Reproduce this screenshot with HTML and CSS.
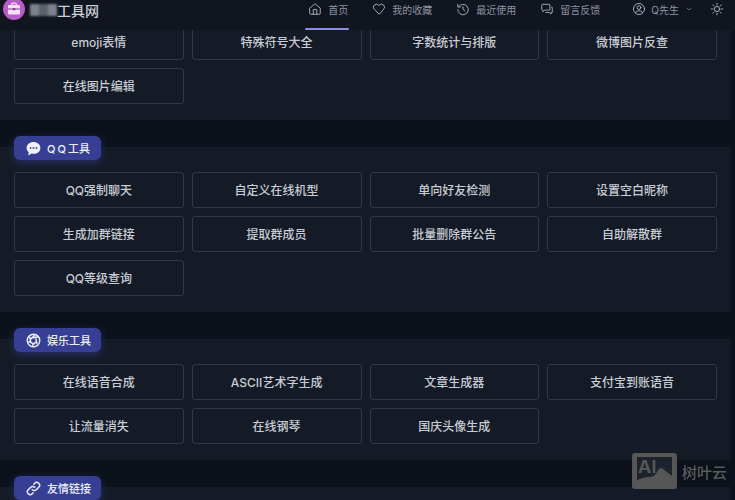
FILE: index.html
```html
<!DOCTYPE html>
<html lang="en">
<head>
    <meta charset="UTF-8">
    <meta name="viewport" content="width=device-width, initial-scale=1.0">
    <title>工具网</title>
    <link rel="stylesheet" href="styles.css">
</head>
<body>

<header class="topbar">
    <div class="brand">
        <svg class="logo" viewBox="0 0 24 24">
            <circle cx="12" cy="12" r="12" fill="#b85cc8"/>
            <path d="M9.500 8V6.500a1 1 0 0 1 1-1h3a1 1 0 0 1 1 1V8" fill="none" stroke="#f3e2f3" stroke-width="1.400"/>
            <path d="M6.500 7.500h11a1 1 0 0 1 1 1V17a1 1 0 0 1-1 1h-11a1 1 0 0 1-1-1V8.500a1 1 0 0 1 1-1z" fill="#f3e2f3"/>
            <path d="M5.500 12h13" stroke="#8d3c9c" stroke-width="1.100"/>
            <rect x="10.500" y="11" width="3" height="2.300" fill="#8d3c9c"/>
        </svg>
        <span class="brand-blur"><i></i><i></i><i></i></span>
        <span class="brand-name">工具网</span>
    </div>
    <nav class="nav">
        <a class="nav-item active">
            <svg viewBox="0 0 24 24"><path d="M3 10.500 12 3l9 7.500V20a1 1 0 0 1-1 1H4a1 1 0 0 1-1-1z"/><path d="M9 21v-8h6v8"/></svg>
            首页
        </a>
        <a class="nav-item">
            <svg viewBox="0 0 24 24"><path d="M12 20.500 4 12.500a5 5 0 0 1 0-7.200 5.200 5.200 0 0 1 7.300 0l.7.700.7-.7a5.200 5.200 0 0 1 7.300 0 5 5 0 0 1 0 7.200z"/></svg>
            我的收藏
        </a>
        <a class="nav-item">
            <svg viewBox="0 0 24 24"><path d="M4.500 8A9 9 0 1 1 3 13"/><path d="M3 4v4.500h4.500"/><path d="M12 8v4.500l3 2"/></svg>
            最近使用
        </a>
        <a class="nav-item">
            <svg viewBox="0 0 24 24"><path d="M3 5a1 1 0 0 1 1-1h12a1 1 0 0 1 1 1v8a1 1 0 0 1-1 1H8l-3 2.500V14H4a1 1 0 0 1-1-1z"/><path d="M20 9h1v9h-2v2.500L16 18h-6"/></svg>
            留言反馈
        </a>
        <a class="nav-item user">
            <svg viewBox="0 0 24 24"><circle cx="12" cy="12" r="9.500"/><circle cx="12" cy="9.500" r="3.200"/><path d="M6 18.500c1.200-2.600 3.400-3.500 6-3.500s4.800.9 6 3.500"/></svg>
            Q先生
            <svg class="caret" viewBox="0 0 24 24"><path d="m6 9 6 6 6-6"/></svg>
        </a>
        <svg class="theme" viewBox="0 0 24 24">
            <circle cx="12" cy="12" r="4.500"/>
            <path d="M12 2v3M12 19v3M2 12h3M19 12h3M4.900 4.900 7 7M17 17l2.100 2.100M4.900 19.100 7 17M17 7l2.100-2.100"/>
        </svg>
    </nav>
</header>

<main class="page">
    <section class="card first">
        <div class="tools">
            <a class="tool">emoji表情</a>
            <a class="tool">特殊符号大全</a>
            <a class="tool">字数统计与排版</a>
            <a class="tool">微博图片反查</a>
            <a class="tool">在线图片编辑</a>
        </div>
    </section>

    <section class="card">
        <h3 class="badge">
            <svg viewBox="0 0 24 24"><path class="fill" d="M12 1.500c6 0 11 4 11 9.500s-5 9.500-11 9.500c-1 0-2-.1-3-.4L3.500 23l.8-5.200C2.300 16 1 13.700 1 11 1 5.500 6 1.500 12 1.500z"/><circle class="dot" cx="7.200" cy="11" r="1.500"/><circle class="dot" cx="12" cy="11" r="1.500"/><circle class="dot" cx="16.800" cy="11" r="1.500"/></svg>
            <span><span class="spaced">QQ</span>工具</span>
        </h3>
        <div class="tools">
            <a class="tool">QQ强制聊天</a>
            <a class="tool">自定义在线机型</a>
            <a class="tool">单向好友检测</a>
            <a class="tool">设置空白昵称</a>
            <a class="tool">生成加群链接</a>
            <a class="tool">提取群成员</a>
            <a class="tool">批量删除群公告</a>
            <a class="tool">自助解散群</a>
            <a class="tool">QQ等级查询</a>
        </div>
    </section>

    <section class="card">
        <h3 class="badge">
            <svg viewBox="0 0 24 24"><circle class="line" cx="12" cy="12" r="10"/><path class="line" d="M12 7.500 19.500 6M16 9.500l1.500 7.500M16.500 13.500 10.500 19.500M11 16.500 4.500 14M7.500 14 6 6.500M7.500 9.800 13.500 4"/></svg>
            <span>娱乐工具</span>
        </h3>
        <div class="tools">
            <a class="tool">在线语音合成</a>
            <a class="tool">ASCII艺术字生成</a>
            <a class="tool">文章生成器</a>
            <a class="tool">支付宝到账语音</a>
            <a class="tool">让流量消失</a>
            <a class="tool">在线钢琴</a>
            <a class="tool">国庆头像生成</a>
        </div>
    </section>

    <section class="card">
        <h3 class="badge">
            <svg viewBox="0 0 24 24"><path class="line" d="M10 14a4.500 4.500 0 0 0 6.400 0l4-4A4.500 4.500 0 0 0 14 3.600l-1.500 1.500"/><path class="line" d="M14 10a4.500 4.500 0 0 0-6.400 0l-4 4a4.500 4.500 0 0 0 6.400 6.400l1.500-1.500"/></svg>
            <span>友情链接</span>
        </h3>
    </section>
</main>

<div class="watermark">
    <svg viewBox="0 0 45 36">
        <rect width="45" height="36" rx="3" fill="#565656"/>
        <rect x="5" y="4" width="35" height="27" fill="#1d232c"/>
        <text x="6" y="20" class="wm-ai">AI</text>
        <path d="M5 27c5-2 9-3 13-3 5 0 6-4 9-8 1-1.500 2.500-1.500 4 0l9 7v8H5z" fill="#565656"/>
    </svg>
    <span>树叶云</span>
</div>

</body>
</html>
```

FILE: styles.css
```css
* {
    box-sizing: border-box;
}
html, body {
    height: 100%;
}
body {
    margin: 0;
    overflow: hidden;
    background-color: #0c121b;
    color: #c3c9d1;
    font-family: Inter, "Noto Sans CJK SC", "Noto Sans", sans-serif;
}
svg {
    display: block;
    flex: none;
}

/* top bar sits over the scrolled page */
.topbar {
    position: fixed;
    top: 0;
    left: 0;
    right: 0;
    z-index: 5;
    height: 30px;
    padding: 0 11px 0 3px;
    display: flex;
    align-items: flex-start;
    justify-content: space-between;
    background-color: #10151f;
}
.brand {
    display: flex;
    align-items: center;
    height: 20px;
}
.logo {
    width: 22px;
    height: 22px;
    margin-top: -2px;
}
.brand-blur {
    display: flex;
    margin-left: 5px;
    filter: blur(1px);
}
.brand-blur i {
    width: 9px;
    height: 12px;
    background-color: #7d828c;
}
.brand-blur i:nth-child(2) {
    background-color: #5b606b;
}
.brand-name {
    font-size: 14px;
    font-weight: 500;
    color: #c9ced6;
}
.nav {
    display: flex;
    align-items: flex-start;
}
.nav svg {
    fill: none;
    stroke: #b3b8c2;
    stroke-width: 1.500;
    stroke-linecap: round;
    stroke-linejoin: round;
}
.nav-item {
    position: relative;
    display: flex;
    align-items: center;
    gap: 6px;
    height: 18px;
    margin-right: 24px;
    font-size: 10px;
    color: #8f96a3;
}
.nav-item svg {
    width: 14px;
    height: 14px;
}
.nav-item.active::after {
    content: "";
    position: absolute;
    left: -3px;
    right: -1px;
    top: 28px;
    height: 2px;
    border-radius: 1px;
    background-color: #8b8fe0;
}
.nav-item.user {
    margin-left: 8px;
    margin-right: 17px;
    gap: 5px;
}
.nav-item .caret {
    width: 8px;
    height: 8px;
    margin-left: 1px;
}
.theme {
    width: 14px;
    height: 14px;
    margin-top: 2px;
}

/* sections */
.page {
    display: flex;
    flex-direction: column;
    gap: 27px;
    height: 100vh;
    overflow: hidden;
}
.card {
    position: relative;
    flex: none;
    margin-right: 4px;
    padding: 25px 14px 16px;
    background-color: #151b26;
}
.card.first {
    padding-top: 24px;
}
.badge {
    position: absolute;
    top: -11px;
    left: 14px;
    display: flex;
    align-items: center;
    gap: 6px;
    width: 87px;
    height: 24px;
    margin: 0;
    padding-left: 12px;
    border-radius: 6px;
    font-size: 11px;
    font-weight: 500;
    color: #eceef6;
    background-color: #363f93;
    box-shadow: 0 3px 8px rgba(54, 63, 147, .55);
}
.badge svg {
    width: 15px;
    height: 15px;
}
.badge .fill {
    fill: #f0f1f7;
}
.badge .dot {
    fill: #363f93;
}
.badge .line {
    fill: none;
    stroke: #f0f1f7;
    stroke-width: 2.300;
    stroke-linecap: round;
}
.spaced {
    letter-spacing: 2px;
}
.tools {
    display: grid;
    grid-template-columns: repeat(4, 169.750px);
    gap: 8px;
}
.tool {
    display: flex;
    align-items: center;
    justify-content: center;
    height: 36px;
    padding-bottom: 2px;
    border: 1px solid #2f3a44;
    border-radius: 3px;
    font-size: 12px;
    font-weight: 500;
    color: #c8cdd5;
}

.watermark {
    position: fixed;
    left: 632px;
    top: 453px;
    z-index: 6;
    display: flex;
    align-items: center;
    gap: 5px;
    font-size: 15px;
    font-weight: 500;
    color: #5d5d5d;
}
.watermark svg {
    width: 45px;
    height: 36px;
}
.wm-ai {
    font-size: 18px;
    font-weight: 700;
    fill: #565656;
}
```
